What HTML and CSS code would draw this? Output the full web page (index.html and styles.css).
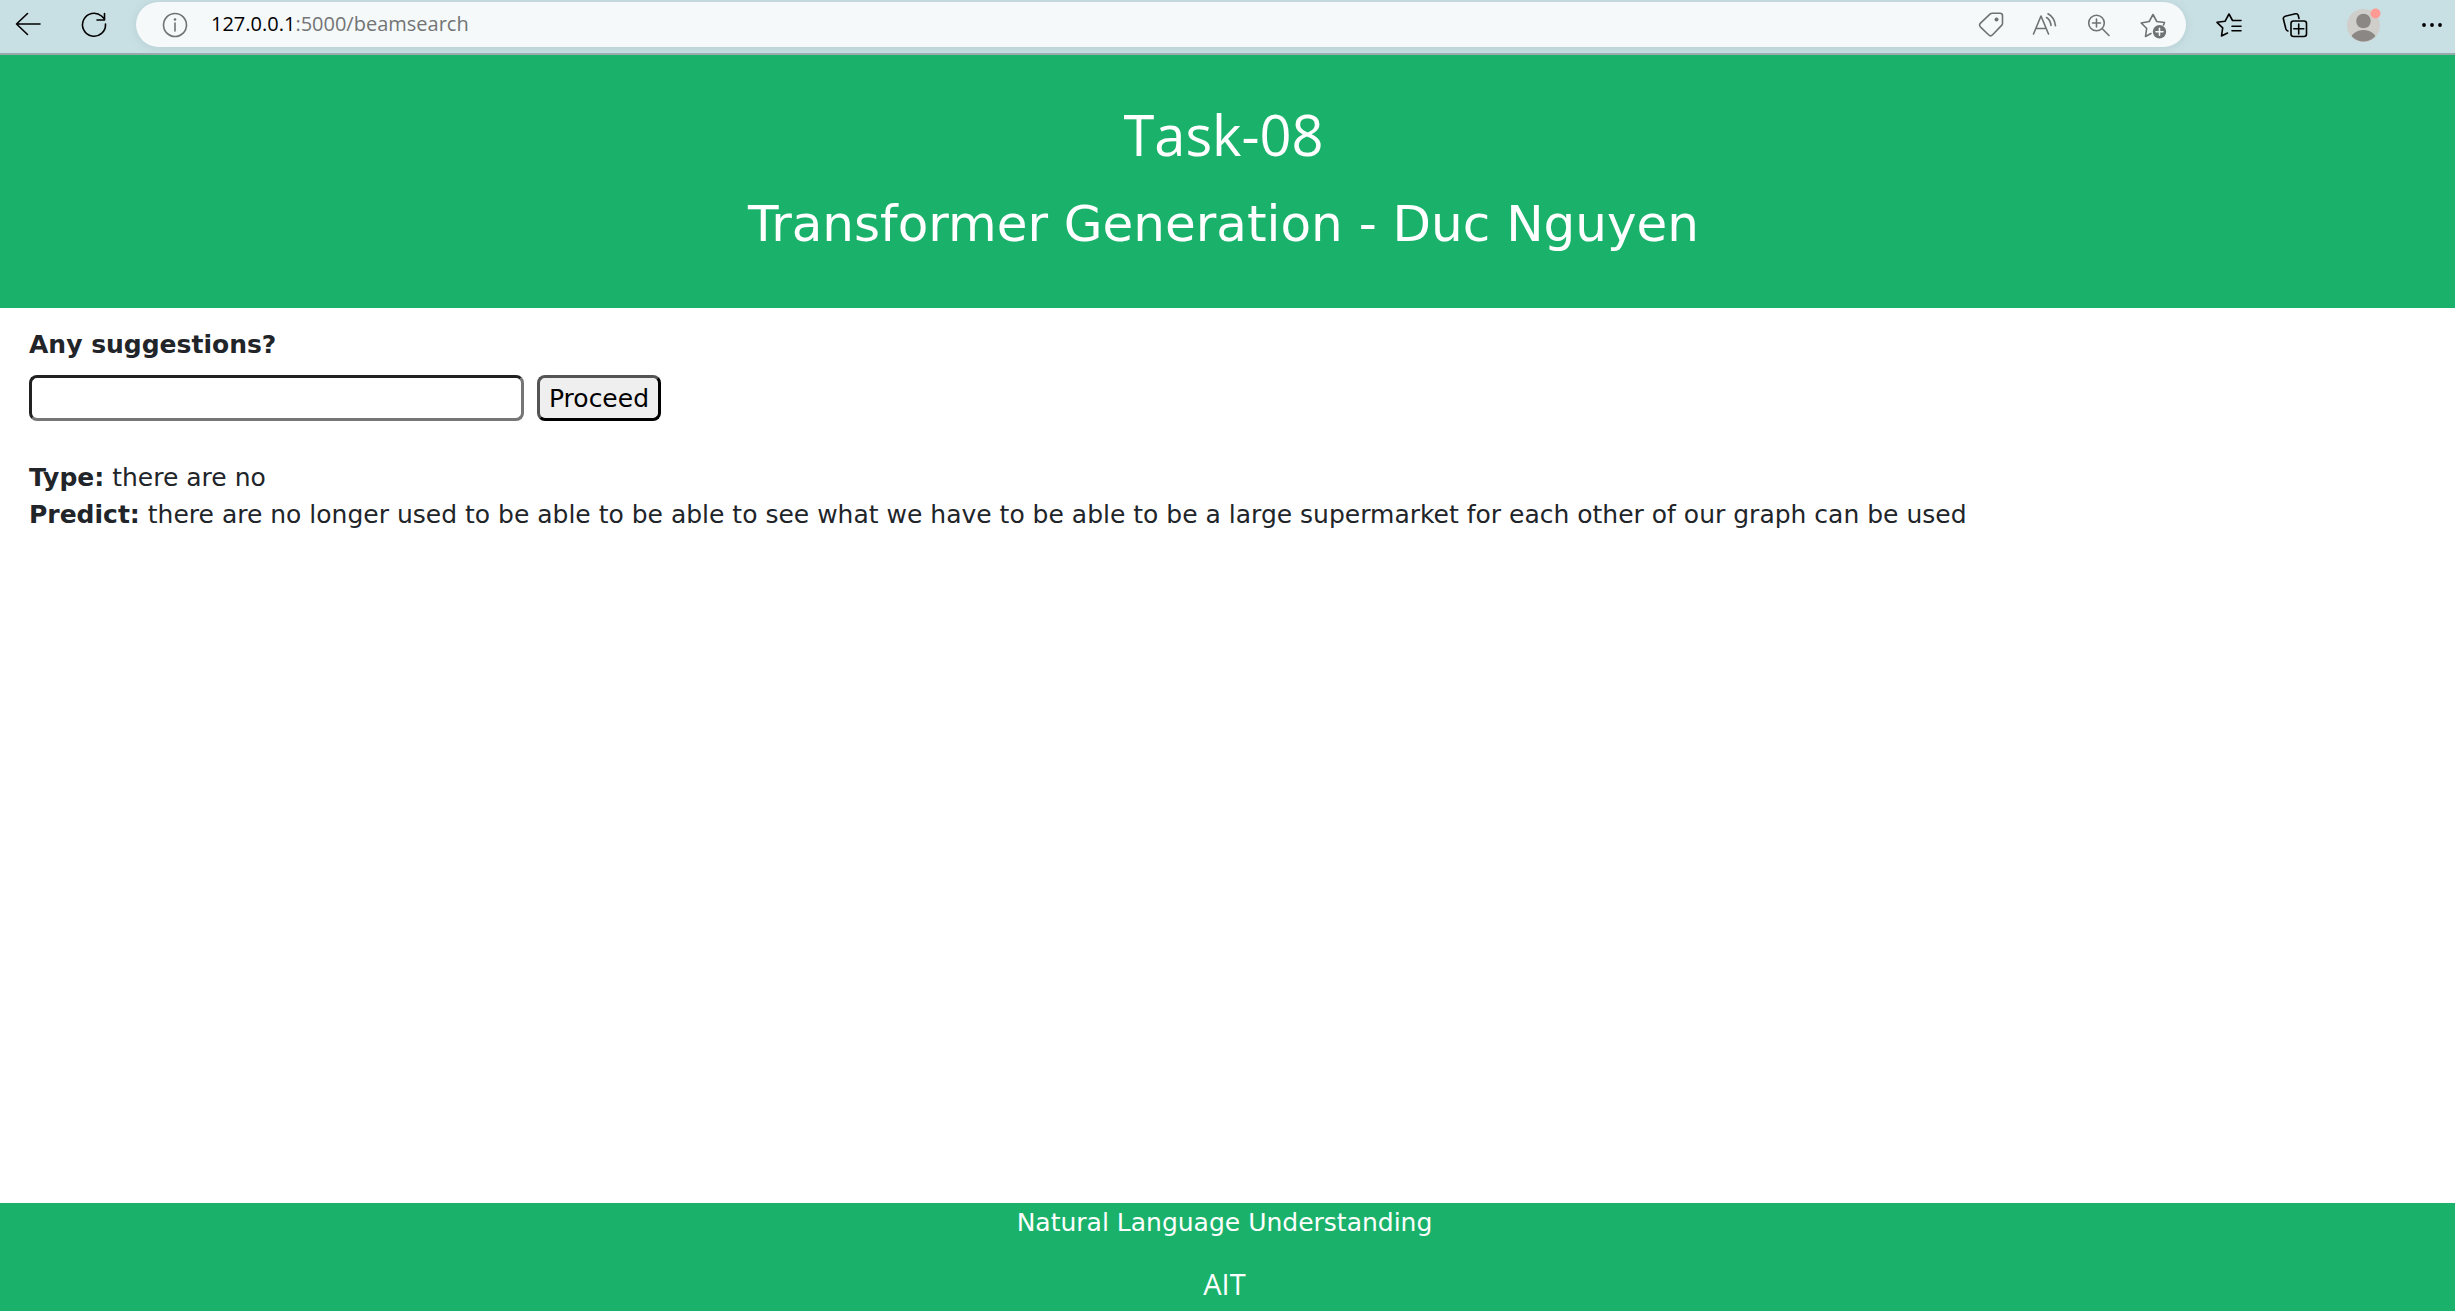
FILE: index.html
```html
<!DOCTYPE html>
<html lang="en">
<head>
<meta charset="utf-8">
<title>Transformer Generation</title>
<link rel="stylesheet" href="styles.css">
</head>
<body>
<nav class="toolbar" aria-label="Browser">
  <div class="nav-buttons">
    <button class="icon-button" type="button" aria-label="Back">
      <svg viewBox="0 0 32 32"><path d="M28 15H4.500M15.500 4.500L4.500 15l11 10.500"/></svg>
    </button>
    <button class="icon-button" type="button" aria-label="Refresh">
      <svg viewBox="0 0 32 32"><path d="M27.500 15A11.500 11.500 0 1 1 23.500 7L26 9.500M26.500 4.500V11H19"/></svg>
    </button>
  </div>
  <div class="address-bar">
    <button class="icon-button" type="button" aria-label="Site information">
      <svg viewBox="0 0 32 32"><circle cx="16" cy="16" r="11.500"/><path d="M16 14v8"/><circle class="solid" cx="16" cy="10.500" r="1.300"/></svg>
    </button>
    <div class="url"><span class="url-host">127.0.0.1</span>:5000/beamsearch</div>
    <div class="page-actions">
      <button class="icon-button" type="button" aria-label="Shopping">
        <svg viewBox="0 0 32 32"><path d="M17.500 4.200H25a2.500 2.500 0 0 1 2.500 2.500v7.500q0 1.200-.9 2.200l-9 9.400q-2 2-4 0l-7.800-7.500q-2.300-2-.3-4.200l9.500-9q1-.9 2.500-.9z"/><circle class="solid" cx="21.500" cy="10.500" r="2"/></svg>
      </button>
      <button class="icon-button" type="button" aria-label="Read aloud">
        <svg viewBox="0 0 32 32"><path d="M4.500 25l7.500-18 7.500 18M7 19.500h10M17.500 8.500q4 2.500 4.500 8M19 4.800q6.500 3.500 7.500 12"/></svg>
      </button>
      <button class="icon-button" type="button" aria-label="Zoom">
        <svg viewBox="0 0 32 32"><circle cx="13.500" cy="14" r="7.800"/><path d="M19.300 19.700l6.700 6.800M13.500 10v8M9.500 14h8"/></svg>
      </button>
      <button class="icon-button" type="button" aria-label="Add to favorites">
        <svg viewBox="0 0 32 32"><path d="M26.500 16l1-2.500-7.700-1-3.800-7-3.800 7-8 1.500 5.500 5.500-1.200 8 5.500-3"/><circle class="solid" cx="22.500" cy="22.800" r="6.700"/><path class="cutout" d="M22.500 19.300v7M19 22.800h7"/></svg>
      </button>
    </div>
  </div>
  <div class="browser-actions">
    <button class="icon-button" type="button" aria-label="Favorites">
      <svg viewBox="0 0 32 32"><path d="M15.500 24L9.500 27l1.200-8.200L5 13.300l8-1L17 5l3.500 6.500H29M20 17.200h9M20 21.800h9"/></svg>
    </button>
    <button class="icon-button" type="button" aria-label="Collections">
      <svg viewBox="0 0 32 32"><path d="M19 9.500l-.8-3.200q-.7-2-2.700-1.500L5.200 7.200Q2.900 8 3.400 10l2.500 10q.5 1.500 2 2"/><rect x="11" y="12" width="15.500" height="15.500" rx="2.500"/><path d="M18.700 15v10M13.800 19.800h10"/></svg>
    </button>
    <button class="icon-button profile" type="button" aria-label="Profile">
      <svg viewBox="0 0 32 32"><defs><clipPath id="face"><circle cx="15.500" cy="16.500" r="16"/></clipPath></defs><circle class="avatar-back" cx="15.500" cy="16.500" r="16.500"/><g clip-path="url(#face)"><circle class="avatar-person" cx="15.500" cy="12" r="7.300"/><ellipse class="avatar-person" cx="15.500" cy="31.500" rx="13" ry="10.500"/></g><circle class="avatar-alert" cx="27.500" cy="4.500" r="5"/></svg>
    </button>
    <button class="icon-button" type="button" aria-label="Settings and more">
      <svg viewBox="0 0 32 32"><circle class="solid" cx="8" cy="16" r="1.900"/><circle class="solid" cx="16" cy="16" r="1.900"/><circle class="solid" cx="24" cy="16" r="1.900"/></svg>
    </button>
  </div>
</nav>
<header class="banner">
  <h1>Task-08</h1>
  <h2>Transformer Generation - Duc Nguyen</h2>
</header>
<main class="content">
  <form class="prompt">
    <label for="suggestion">Any suggestions?</label>
    <div class="prompt-row">
      <input id="suggestion" type="text">
      <button class="proceed" type="submit">Proceed</button>
    </div>
  </form>
  <div class="result">
    <p><strong>Type:</strong> there are no</p>
    <p><strong>Predict:</strong> there are no longer used to be able to be able to see what we have to be able to be a large supermarket for each other of our graph can be used</p>
  </div>
</main>
<footer class="footer">
  <p>Natural Language Understanding</p>
  <p class="school">AIT</p>
</footer>
</body>
</html>
```
FILE: styles.css
```css
* { box-sizing: border-box; }

body {
  margin: 0;
  min-height: 100vh;
  display: flex;
  flex-direction: column;
  background: #fff;
  color: #212529;
  font: 25px/37px Verdana, "DejaVu Sans", sans-serif;
}

h1, h2, p { margin: 0; font-weight: 400; }

.toolbar {
  display: flex;
  align-items: center;
  height: 55px;
  padding: 0 7px 4px 12px;
  background: #c8dfe3;
  border-bottom: 2px solid #98a9ae;
}

.nav-buttons { display: flex; gap: 34px; margin-right: 26px; }
.page-actions { display: flex; gap: 22px; margin-left: auto; }
.browser-actions { display: flex; gap: 36px; margin-left: 26px; }

.address-bar {
  flex: 1;
  display: flex;
  align-items: center;
  gap: 20px;
  height: 45px;
  padding: 0 17px 0 23px;
  border-radius: 23px;
  background: #f5f9fa;
  box-shadow: 0 1px 8px #b5cdd2;
  color: #737475;
}

.url { padding-bottom: 2px; font: 20px/30px "Segoe UI", "Open Sans", sans-serif; }
.url-host { color: #000; }

.icon-button {
  width: 32px;
  height: 32px;
  padding: 0;
  border: 0;
  background: none;
  color: #000;
}
.address-bar .icon-button { color: #707273; }
.icon-button svg {
  display: block;
  width: 32px;
  height: 32px;
  overflow: visible;
  fill: none;
  stroke: currentColor;
  stroke-width: 1.6;
  stroke-linecap: round;
  stroke-linejoin: round;
}
.icon-button .solid { fill: currentColor; stroke: none; }
.icon-button .cutout { stroke: #f5f9fa; }
.profile svg { stroke: none; }
.avatar-back { fill: #d0cecb; }
.avatar-person { fill: #8b8785; }
.avatar-alert { fill: #ff9a94; }

.banner {
  height: 253px;
  padding: 42px 8px 0 0;
  background: #1ab26b;
  color: #fff;
  text-align: center;
}
.banner h1 { font: 400 56px/75px "Segoe UI", "Open Sans", sans-serif; }
.banner h2 { margin-top: 22px; font-size: 50px; line-height: 60px; }

.content { flex: 1; padding: 18px 29px; }
.prompt label { display: block; font-weight: 700; }
.prompt-row { display: flex; gap: 13px; margin-top: 12px; }
.prompt input, .proceed {
  height: 46px;
  border-width: 3px;
  border-radius: 8px;
  font: inherit;
}
.prompt input {
  width: 495px;
  border-style: inset;
  border-color: #767676;
  background: #fff;
}
.proceed {
  width: 124px;
  padding: 0;
  border-style: outset;
  border-color: #000;
  background: #efefef;
  color: #000;
}
.result { margin-top: 38px; }

.footer {
  height: 108px;
  padding: 1px 6px 0 0;
  background: #1ab26b;
  color: #fff;
  text-align: center;
}
.footer .school { margin-top: 24px; font: 29px/37px "Segoe UI", "Open Sans", sans-serif; }
```
